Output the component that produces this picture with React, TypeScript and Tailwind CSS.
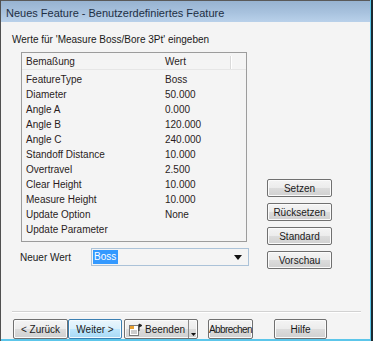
import React from 'react';

const rows: [string, string][] = [
  ['FeatureType', 'Boss'],
  ['Diameter', '50.000'],
  ['Angle A', '0.000'],
  ['Angle B', '120.000'],
  ['Angle C', '240.000'],
  ['Standoff Distance', '10.000'],
  ['Overtravel', '2.500'],
  ['Clear Height', '10.000'],
  ['Measure Height', '10.000'],
  ['Update Option', 'None'],
  ['Update Parameter', ''],
];

const btnFace =
  'bg-[linear-gradient(#f4f4f4_0%,#ececec_48%,#dcdcdc_52%,#d0d0d0_100%)] border border-[#707070] rounded-[2px] shadow-[inset_0_0_0_1px_#fbfbfb]';

function Btn({ children, className = '' }: { children: React.ReactNode; className?: string }) {
  return (
    <div className={`flex items-center justify-center text-[10px] text-[#1a1a1a] ${btnFace} ${className}`}>
      {children}
    </div>
  );
}

function FinishIcon() {
  return (
    <svg width="15" height="13" viewBox="0 0 15 13">
      <rect x="1.5" y="2.5" width="9" height="10" fill="#fff" stroke="#7a7a7a" />
      <rect x="2" y="3" width="4" height="3" fill="#e8a030" />
      <path d="M3 8h6M3 10h6" stroke="#9a9a9a" />
      <path d="M11 1v7M11 1l3 1.5-3 1.5" stroke="#222" fill="#222" strokeWidth="1" />
    </svg>
  );
}

export default function App() {
  return (
    <div className="w-[373px] h-[341px] flex flex-col border-l border-l-[#505050] border-r-2 border-r-[#1c2a30] font-['Liberation_Sans',Arial,sans-serif]">
      <div className="flex-1 flex flex-col bg-[#f4f4f4] border-r border-r-[#5cc6ea] border-b-2 border-b-[#5cc6ea]">
        {/* Title bar */}
        <div className="h-[22px] shrink-0 flex items-center pl-[5px] pt-[3px] border-t border-t-[#5a5a5a] bg-[linear-gradient(#97b3d1,#a8c2de_55%,#b9d1ea)] text-[11px] text-[#1e2f44]">
          Neues Feature - Benutzerdefiniertes Feature
        </div>

        <div className="flex flex-col px-[11px]">
          <div className="mt-[12px] text-[10px] leading-[12px] text-[#1a1a1a]">
            Werte für 'Measure Boss/Bore 3Pt' eingeben
          </div>

          <div className="flex mt-[6px]">
            <div className="flex flex-col">
              {/* List */}
              <div className="ml-[9px] w-[226px] h-[190px] border border-[#9c9c9c] text-[10px] text-[#2a1c1c]">
                <div className="h-[17px] flex items-center border-b border-b-[#e6e6e6] pt-[1px]">
                  <div className="w-[143px] pl-[4px]">Bemaßung</div>
                  <div className="w-[65px]">Wert</div>
                  <div className="w-[2px] h-[13px] mt-[2px] bg-[#dadada] border-r border-r-white" />
                </div>
                <div className="pt-[2px]">
                  {rows.map(([k, v]) => (
                    <div key={k} className="h-[15px] flex items-center">
                      <div className="w-[143px] pl-[4px]">{k}</div>
                      <div>{v}</div>
                    </div>
                  ))}
                </div>
              </div>

              {/* Neuer Wert */}
              <div className="flex items-center mt-[6px] ml-[8px] text-[10px] text-[#1a1a1a]">
                <div className="w-[71px]">Neuer Wert</div>
                <div className="w-[158px] h-[18px] flex items-center justify-between border border-[#abc2d8] bg-[#f4f4f4] pl-[1px] pr-[6px]">
                  <span className="bg-[#3399ff] text-white h-[14px] leading-[14px] px-[1px] w-[25px]">Boss</span>
                  <svg width="8" height="5" viewBox="0 0 8 5">
                    <path d="M0 0h8L4 5z" fill="#111" />
                  </svg>
                </div>
              </div>
            </div>

            {/* Side buttons */}
            <div className="flex flex-col gap-[6px] ml-[18px] mt-[127px]">
              <Btn className="w-[65px] h-[18px]">Setzen</Btn>
              <Btn className="w-[65px] h-[18px]">Rücksetzen</Btn>
              <Btn className="w-[65px] h-[18px]">Standard</Btn>
              <Btn className="w-[65px] h-[18px]">Vorschau</Btn>
            </div>
          </div>

          {/* Separator */}
          <div className="mt-[42px] -mr-[2px] border-t border-t-[#d2d2d2] border-b border-b-white" />

          {/* Bottom buttons */}
          <div className="flex mt-[6px] h-[20px] ml-[1px]">
            <Btn className="w-[55px]">&lt; Zurück</Btn>
            <div className="w-[54px] flex items-center justify-center text-[10px] text-[#1a1a1a] border border-[#3c7fb1] rounded-[2px] bg-[linear-gradient(#eaf6fd_0%,#d9f0fc_48%,#bee6fd_52%,#a7d9f5_100%)] shadow-[inset_0_0_0_1px_#f4fbff]">
              Weiter &gt;
            </div>
            <div className={`ml-[2px] w-[74px] flex ${btnFace}`}>
              <div className="flex-1 flex items-center gap-[2px] pl-[3px] text-[10px] text-[#1a1a1a]">
                <FinishIcon />
                <span>Beenden</span>
              </div>
              <div className="w-[9px] border-l border-l-[#8a8a8a] flex items-end justify-center pb-[2px]">
                <svg width="5" height="3" viewBox="0 0 5 3">
                  <path d="M0 0h5L2.5 3z" fill="#111" />
                </svg>
              </div>
            </div>
            <Btn className="ml-[10px] w-[45px] tracking-[-0.6px]">Abbrechen</Btn>
            <Btn className="ml-[21px] w-[53px]">Hilfe</Btn>
          </div>
        </div>
      </div>
    </div>
  );
}
